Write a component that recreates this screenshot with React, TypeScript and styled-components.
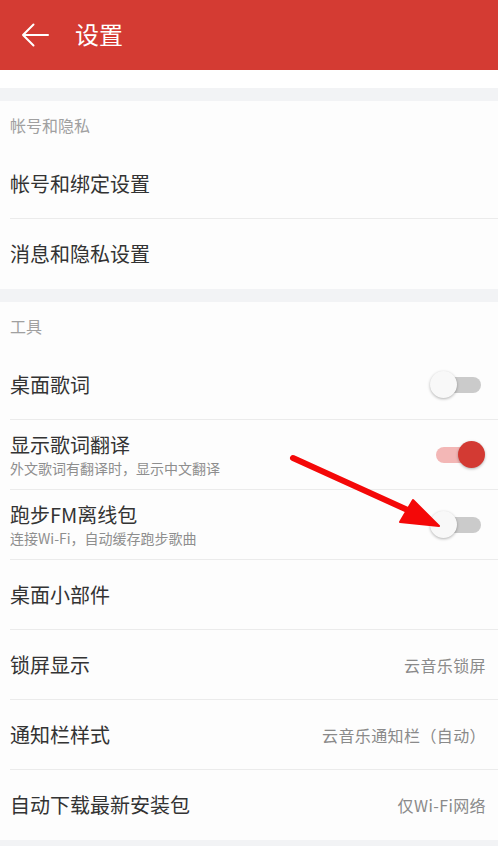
import React from 'react';
import styled, { createGlobalStyle } from 'styled-components';

const GlobalStyle = createGlobalStyle`
  html, body {
    margin: 0;
    padding: 0;
    background: #ffffff;
    font-family: "Noto Sans CJK SC", "Noto Sans", "Liberation Sans", sans-serif;
  }
  * { box-sizing: border-box; }
`;

type Item = {
  title: string;
  sub?: string;
  value?: string;
  toggle?: 'on' | 'off';
};

const account: Item[] = [{ title: '帐号和绑定设置' }, { title: '消息和隐私设置' }];

const tools: Item[] = [
  { title: '桌面歌词', toggle: 'off' },
  { title: '显示歌词翻译', sub: '外文歌词有翻译时，显示中文翻译', toggle: 'on' },
  { title: '跑步FM离线包', sub: '连接Wi-Fi，自动缓存跑步歌曲', toggle: 'off' },
  { title: '桌面小部件' },
  { title: '锁屏显示', value: '云音乐锁屏' },
  { title: '通知栏样式', value: '云音乐通知栏（自动）' },
  { title: '自动下载最新安装包', value: '仅Wi-Fi网络' },
];

const BackArrow = () => (
  <svg width="28" height="24" viewBox="0 0 28 24" fill="none">
    <path d="M2 12H27M2 12L12.5 1.5M2 12L12.5 22.5" stroke="#fff" strokeWidth="2" strokeLinecap="round" />
  </svg>
);

const Toggle: React.FC<{ on: boolean }> = ({ on }) => (
  <Switch>
    <Track $on={on} />
    <Thumb $on={on} />
  </Switch>
);

const Row: React.FC<{ item: Item }> = ({ item }) => (
  <RowWrap>
    <TextCol>
      <Title>{item.title}</Title>
      {item.sub && <Sub>{item.sub}</Sub>}
    </TextCol>
    {item.value && <Value>{item.value}</Value>}
    {item.toggle && <Toggle on={item.toggle === 'on'} />}
  </RowWrap>
);

const App: React.FC = () => (
  <Page>
    <GlobalStyle />
    <Header>
      <BackArrow />
      <HeaderTitle>设置</HeaderTitle>
    </Header>
    <TopGap />
    <Band />
    <Section>
      <SectionTitle>帐号和隐私</SectionTitle>
      {account.map(item => (
        <Row key={item.title} item={item} />
      ))}
    </Section>
    <Band />
    <Section>
      <SectionTitle>工具</SectionTitle>
      {tools.map(item => (
        <Row key={item.title} item={item} />
      ))}
    </Section>
    <Band />
    <Pointer width="498" height="846" viewBox="0 0 498 846">
      <line x1="293" y1="458" x2="412" y2="512" stroke="#f40808" strokeWidth="6" strokeLinecap="round" />
      <polygon points="439,526 400,522 413,500" fill="#f40808" stroke="#f40808" strokeWidth="2" strokeLinejoin="round" />
    </Pointer>
  </Page>
);

export default App;

const Page = styled.div`
  position: relative;
  width: 498px;
  height: 846px;
  overflow: hidden;
  background: #fdfdfd;
`;

const Header = styled.div`
  height: 70px;
  background: #d43b33;
  display: flex;
  align-items: center;
  padding-left: 21px;
  gap: 26px;
`;

const HeaderTitle = styled.div`
  color: #fff;
  font-size: 24px;
  line-height: 1;
  padding-bottom: 2px;
`;

const TopGap = styled.div`
  height: 18px;
  background: #ffffff;
`;

const Band = styled.div`
  height: 13px;
  background: #f2f3f5;
`;

const Section = styled.div`
  background: #fdfdfd;
`;

const SectionTitle = styled.div`
  height: 48px;
  display: flex;
  align-items: center;
  padding-left: 10px;
  font-size: 16px;
  color: #a0a0a0;
`;

const RowWrap = styled.div`
  height: 70px;
  margin-left: 10px;
  padding-right: 12px;
  display: flex;
  align-items: center;
  justify-content: space-between;
  border-bottom: 1px solid #ebebeb;

  &:last-child {
    border-bottom: none;
  }
`;

const TextCol = styled.div`
  display: flex;
  flex-direction: column;
`;

const Title = styled.div`
  font-size: 20px;
  line-height: 26px;
  color: #333333;
`;

const Sub = styled.div`
  font-size: 14px;
  line-height: 20px;
  color: #8e8e8e;
`;

const Value = styled.div`
  font-size: 16px;
  letter-spacing: 0.4px;
  color: #8a8a8a;
`;

const Switch = styled.div`
  position: relative;
  width: 52px;
  height: 28px;
  margin-right: 4px;
`;

const Track = styled.div<{ $on: boolean }>`
  position: absolute;
  top: 6px;
  left: ${p => (p.$on ? '6px' : '2px')};
  width: ${p => (p.$on ? '40px' : '49px')};
  height: 16px;
  border-radius: 8px;
  background: ${p => (p.$on ? '#f3b7b6' : '#cbcbcb')};
`;

const Thumb = styled.div<{ $on: boolean }>`
  position: absolute;
  top: 0;
  left: ${p => (p.$on ? '28px' : '0')};
  width: 27px;
  height: 27px;
  border-radius: 50%;
  background: ${p => (p.$on ? '#d33a33' : '#f8f8f8')};
  box-shadow: 0 1px 3px rgba(0, 0, 0, 0.3);
`;

const Pointer = styled.svg`
  position: absolute;
  left: 0;
  top: 0;
  pointer-events: none;
`;
